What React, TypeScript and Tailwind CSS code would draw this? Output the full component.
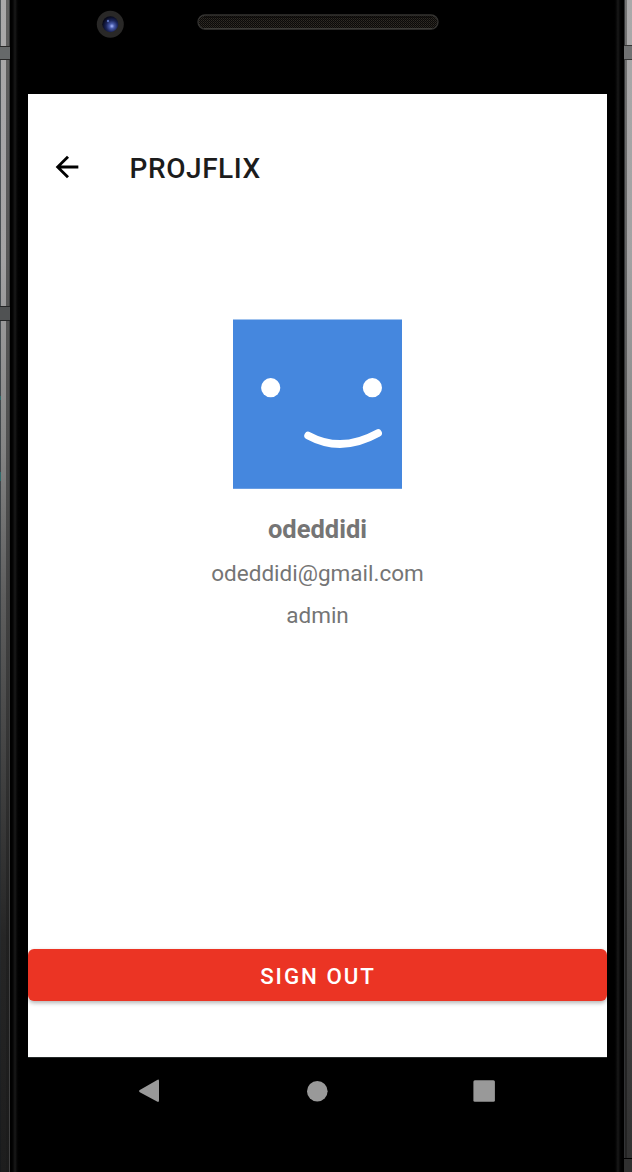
import type { ReactNode } from "react";

function LeftFrame() {
  return (
    <div className="relative flex w-7 shrink-0 bg-black">
      <div className="w-px bg-linear-to-b from-[#51575b] via-[#3c4246] via-50% to-[#17191b]" />
      <div className="w-[5px] bg-[linear-gradient(to_bottom,#aaa9aa_0%,#a3a2a3_22%,#858585_38%,#5e5e5e_51%,#454545_64%,#262626_80%,#1d1d1d_100%)]" />
      <div className="w-[3px] bg-[linear-gradient(to_bottom,#606060_0%,#505050_38%,#383838_60%,#202020_80%,#1b1b1b_100%)]" />
      <div className="w-px bg-linear-to-b from-[#3b3d3e] to-[#404040]" />
      <div className="w-[10px] bg-linear-to-r from-black via-[#191919] to-black" />
      <div className="absolute top-[46px] left-0 h-[14px] w-[10px] border-y border-[#282828] bg-[#66696a]" />
      <div className="absolute top-[306px] left-0 h-[15px] w-[10px] border-y border-[#242526] bg-[#505253]" />
      <div className="absolute top-[396px] left-0 h-1 w-px bg-[#2f6a6a]" />
      <div className="absolute top-[472px] left-0 h-[9px] w-px bg-[#2f6a6a]" />
    </div>
  );
}

function RightFrame() {
  return (
    <div className="relative flex w-[25px] shrink-0 bg-black">
      <div className="w-[6px]" />
      <div className="w-[10px] bg-linear-to-r from-black via-[#191919] to-black" />
      <div className="ml-px w-px bg-[#333436]" />
      <div className="w-[2px] bg-linear-to-b from-[#747474] via-[#555555] via-40% to-[#242424] to-80%" />
      <div className="w-[5px] bg-[linear-gradient(to_bottom,#aaa9aa_0%,#a3a2a3_22%,#888888_38%,#686868_54%,#505050_68%,#444444_80%,#303030_100%)]" />
      <div className="absolute top-[45px] right-0 h-[15px] w-[8px] border-y border-[#353535] bg-[#707172]" />
      <div className="absolute right-0 bottom-0 h-[14px] w-[8px] border-t border-black bg-[#303030]" />
    </div>
  );
}

function Bezel() {
  return (
    <header className="flex h-[94px] shrink-0 items-start bg-black pt-[10px]">
      <svg className="ml-[68px] size-7" viewBox="0 0 28 28">
        <defs>
          <radialGradient id="lens" cx="60%" cy="62%" r="60%">
            <stop offset="0" stopColor="#a9b9ff" />
            <stop offset=".25" stopColor="#4a5cab" />
            <stop offset=".6" stopColor="#1b255a" />
            <stop offset="1" stopColor="#07091a" />
          </radialGradient>
        </defs>
        <circle cx="14.3" cy="14.2" r="13.5" fill="#292827" />
        <circle cx="14.3" cy="14.2" r="8" fill="url(#lens)" />
        <circle cx="12" cy="11" r="1.2" fill="#5a6fb8" />
      </svg>
      <svg className="mt-1 ml-[73px] h-4 w-[242px]" viewBox="0 0 242 16">
        <defs>
          <pattern id="mesh" width="2" height="2" patternUnits="userSpaceOnUse">
            <rect width="2" height="2" fill="#0b0a09" />
            <rect width="1" height="1" fill="#302c25" />
            <rect x="1" y="1" width="1" height="1" fill="#24211d" />
          </pattern>
        </defs>
        <rect x="1" y="1" width="240" height="14" rx="7" fill="url(#mesh)" stroke="#343331" strokeWidth="1.3" />
        <path d="M7 3H235" stroke="#0a0909" />
        <path d="M7 14.7H235" stroke="#484844" strokeWidth=".8" />
      </svg>
    </header>
  );
}

function NavButton({ label, children }: { label: string; children: ReactNode }) {
  return (
    <button aria-label={label} className="flex size-6 items-center justify-center">
      <svg className="size-6" viewBox="0 0 24 24" fill="#999">{children}</svg>
    </button>
  );
}

function Avatar() {
  return (
    <svg className="mt-[120px] h-[170px] w-[169px]" viewBox="0 0 169 170" fill="none">
      <rect y=".5" width="169" height="169.3" fill="#4587de" />
      <circle cx="37.7" cy="68.7" r="9.6" fill="white" />
      <circle cx="139.4" cy="68.7" r="9.6" fill="white" />
      <path d="M75.2 116.6C98 129 122 127 145 114.2" stroke="white" strokeWidth="7.8" strokeLinecap="round" />
    </svg>
  );
}

export default function App() {
  return (
    <div className="flex h-[1172px] w-[632px] overflow-hidden bg-black font-[Roboto,sans-serif]">
      <LeftFrame />
      <div className="flex w-[579px] flex-col">
        <Bezel />
        <main className="flex h-[963px] flex-col items-center bg-white">
          <div className="mt-[44px] flex h-[61px] w-full items-center">
            <button aria-label="Back" className="-mt-[3px] ml-[22px]">
              <svg className="size-[34px]" viewBox="0 0 24 24">
                <path d="M20 11H7.83l5.59-5.59L12 4l-8 8 8 8 1.41-1.41L7.83 13H20v-2z" />
              </svg>
            </button>
            <h1 className="ml-[45.6px] text-[28px] leading-9 font-medium tracking-[0.55px] text-[#1c1c1c]">PROJFLIX</h1>
          </div>
          <div className="flex flex-col items-center text-[#757575]">
            <Avatar />
            <h2 className="mt-[22px] text-[25.5px] leading-[36px] font-bold">odeddidi</h2>
            <p className="mt-[9px] text-[22.5px] leading-[34px]">odeddidi@gmail.com</p>
            <p className="mt-[8px] text-[22.5px] leading-[34px]">admin</p>
          </div>
          <button className="mt-auto mb-[56px] h-[52px] w-full rounded-[6px] bg-[#eb3424] pt-[3px] pl-[1px] text-[22.3px] font-medium tracking-[1.98px] text-white shadow-[0_2px_4px_rgba(0,0,0,0.3)]">
            SIGN OUT
          </button>
        </main>
        <nav className="flex flex-1 items-start border-t border-[#252929] bg-black pt-[21px]">
          <div className="ml-[109px]">
            <NavButton label="Back"><path d="M2.8 11.1L20.2 .9Q22 0 22 2V21.5Q22 23.5 20 22.6L2.8 13.2Q1 12 2.8 11.1Z" /></NavButton>
          </div>
          <div className="ml-[144px]">
            <NavButton label="Home"><circle cx="12.3" cy="12.2" r="10.3" /></NavButton>
          </div>
          <div className="ml-[143px]">
            <NavButton label="Recent apps"><rect x="1.4" y="1.3" width="21.5" height="21.5" rx="1.5" /></NavButton>
          </div>
        </nav>
      </div>
      <RightFrame />
    </div>
  );
}
